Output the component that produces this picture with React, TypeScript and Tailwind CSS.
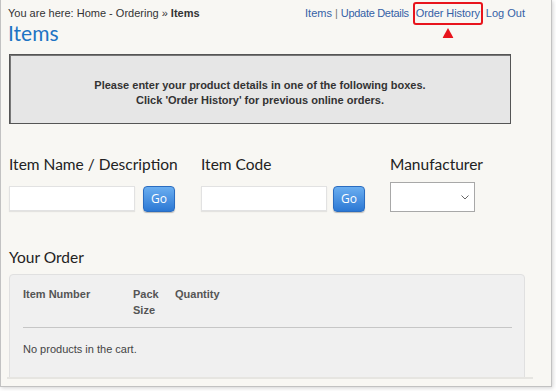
import React from "react";

const arial = { fontFamily: '"Liberation Sans", Arial, sans-serif' };
const open = { fontFamily: 'Lato, "Open Sans", sans-serif' };

function GoButton() {
  return (
    <button
      className="w-[32px] h-[26px] rounded-[4px] border border-[#2a6cc0] bg-gradient-to-b from-[#6aaef0] to-[#2b78d4] text-white text-[12px] leading-none shadow-[0_1px_1px_rgba(0,0,0,0.25)] flex items-center justify-center"
      style={{ fontFamily: '"Open Sans", sans-serif' }}
    >
      Go
    </button>
  );
}

function TextInput() {
  return <div className="w-[126px] h-[25px] bg-white border border-[#e2e2e2] shadow-[0_1px_1px_rgba(0,0,0,0.08)]" />;
}

export default function App() {
  return (
    <div className="w-[556px] h-[391px] bg-white overflow-hidden">
      <div className="w-[552px] h-[387px] bg-[#f8f7f3] border-x border-b border-[#c2c2c2] shadow-[1px_1px_4px_rgba(0,0,0,0.18)] overflow-hidden">
        <div className="ml-[6px] w-[526px] h-[379px] overflow-hidden border-b-2 border-[#e6e5e1]">
          {/* Header */}
          <div className="flex items-start">
            <div className="pl-[1px] pt-[6px]">
              <div className="text-[11px] leading-[14px] text-[#333]" style={arial}>
                You are here: Home - Ordering » <span className="font-bold">Items</span>
              </div>
              <div className="text-[21px] leading-[24px] text-[#1d74c4] mt-[1px]" style={open}>
                Items
              </div>
            </div>
            <div className="ml-auto mr-[8px] mt-[2px] flex items-center h-[23px] text-[11px] text-[#3461a6]" style={arial}>
              <span>Items</span>
              <span className="mx-[3px] text-[#777]">|</span>
              <span className="tracking-[-0.3px]">Update Details</span>
              <span className="relative ml-[4px] h-[23px] px-[1px] flex items-center border-2 border-[#e8141c] rounded-[3px] tracking-[-0.1px]">
                Order History
                <svg
                  className="absolute left-1/2 -translate-x-1/2 top-[24px]"
                  width="11"
                  height="10"
                  viewBox="0 0 11 10"
                >
                  <polygon points="5.5,0 11,10 0,10" fill="#e8141c" />
                </svg>
              </span>
              <span className="ml-[3px]">Log Out</span>
            </div>
          </div>

          {/* Info box */}
          <div
            className="ml-[2px] mt-[9px] w-[502px] h-[70px] bg-[#e6e6e6] border border-[#555] shadow-[inset_1px_1px_0_#777] pt-[23px] text-center text-[11px] leading-[15px] font-bold text-[#333]"
            style={arial}
          >
            <div>Please enter your product details in one of the following boxes.</div>
            <div>Click 'Order History' for previous online orders.</div>
          </div>

          {/* Search fields */}
          <div className="ml-[2px] mt-[29px] flex text-[#222]" style={open}>
            <div className="w-[192px]">
              <div className="text-[15.5px] leading-[22px]">Item Name / Description</div>
              <div className="mt-[11px] flex items-start gap-[8px]">
                <TextInput />
                <GoButton />
              </div>
            </div>
            <div className="w-[189px]">
              <div className="text-[15.5px] leading-[22px]">Item Code</div>
              <div className="mt-[11px] flex items-start gap-[6px]">
                <TextInput />
                <GoButton />
              </div>
            </div>
            <div>
              <div className="text-[15.5px] leading-[22px]">Manufacturer</div>
              <div className="mt-[7px] w-[85px] h-[30px] bg-white border border-[#a8a8a8] flex items-center justify-end pr-[5px]">
                <svg width="8" height="5" viewBox="0 0 8 5">
                  <polyline points="0.5,0.5 4,4 7.5,0.5" fill="none" stroke="#666" strokeWidth="1" />
                </svg>
              </div>
            </div>
          </div>

          {/* Your Order */}
          <div className="ml-[2px] mt-[34px] text-[15.5px] leading-[22px] text-[#222]" style={open}>
            Your Order
          </div>
          <div
            className="ml-[2px] mt-[6px] w-[516px] h-[140px] bg-[#f0f0f0] border border-[#e0e0e0] rounded-t-[4px] pl-[13px] pr-[12px] pt-[11px]"
            style={arial}
          >
            <div className="flex text-[11px] leading-[16px] font-bold text-[#555] pb-[9px] border-b border-[#c6c6c6]">
              <div className="w-[110px]">Item Number</div>
              <div className="w-[42px]">
                Pack
                <br />
                Size
              </div>
              <div>Quantity</div>
            </div>
            <div className="mt-[13px] text-[11px] leading-[16px] text-[#444]">No products in the cart.</div>
          </div>
        </div>
      </div>
    </div>
  );
}
